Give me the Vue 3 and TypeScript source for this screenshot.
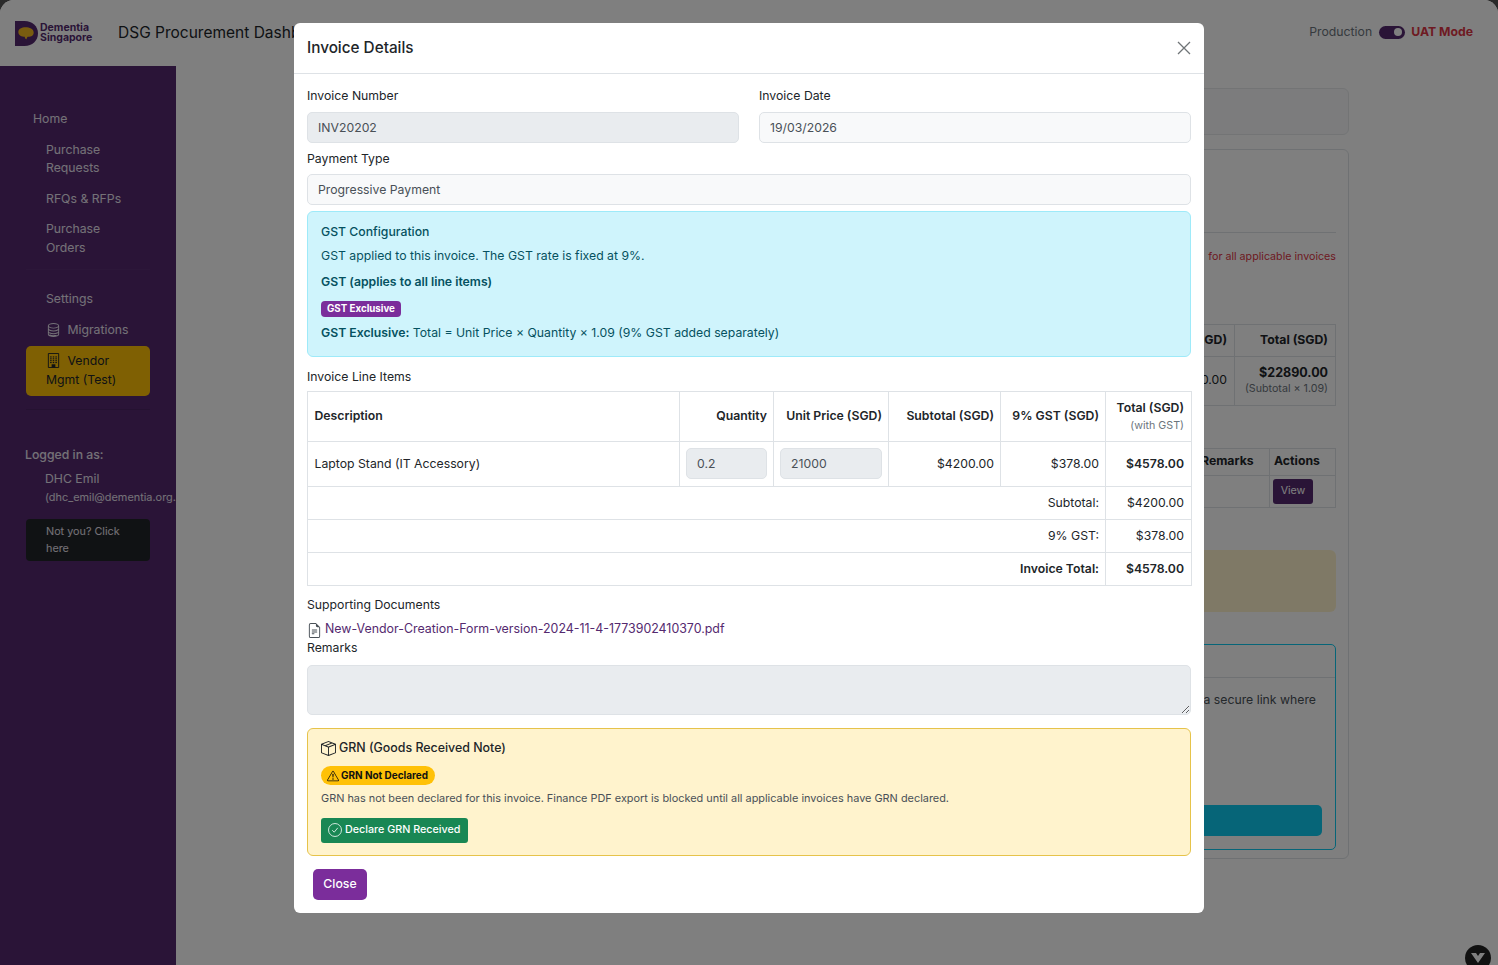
<script setup lang="ts">
const mainNav = ['Purchase Requests', 'RFQs & RFPs', 'Purchase Orders']
const buildingWindows = [3.6, 5.6, 7.6, 9.6]
const summaryRows = [
  { label: 'Subtotal:', value: '$4200.00', strong: false },
  { label: '9% GST:', value: '$378.00', strong: false },
  { label: 'Invoice Total:', value: '$4578.00', strong: true },
]
</script>

<template>
  <div class="page">
    <header class="topbar">
      <div class="logo">
        <svg class="logo-mark" viewBox="0 0 24 26" aria-hidden="true">
          <path fill="#54296f" d="M0 0h10c8 0 14 5.500 14 13s-6 13-14 13H0z" />
          <path fill="#f2b820" d="M3.500 11.500C3.500 8 7 6.500 11 6.500s8.500 1.500 8.500 5.500c0 3-2.500 4.500-5.500 4.500-1 0-1.500 .5-2 2.500-1-.2-1.800-1-1.800-2.500C7 16.500 3.500 15 3.500 11.500z" />
        </svg>
        <div class="logo-text">Dementia<br />Singapore</div>
      </div>
      <div class="app-title">DSG Procurement Dashboard</div>
      <div class="mode">
        <span class="mode-prod">Production</span>
        <span class="switch"><span class="knob"></span></span>
        <span class="mode-uat">UAT Mode</span>
      </div>
    </header>

    <div class="shell">
      <aside class="sidebar">
        <a class="nav-home">Home</a>
        <a v-for="item in mainNav" :key="item" class="nav-item">{{ item }}</a>
        <div class="side-rule"></div>
        <a class="nav-item">Settings</a>
        <a class="nav-item nav-tight">
          <svg class="nav-icon" viewBox="0 0 16 16" fill="currentColor" aria-hidden="true">
            <path d="M4.318 2.687C5.234 2.271 6.536 2 8 2s2.766.27 3.682.687C12.644 3.125 13 3.627 13 4c0 .374-.356.875-1.318 1.313C10.766 5.729 9.464 6 8 6s-2.766-.27-3.682-.687C3.356 4.875 3 4.373 3 4c0-.374.356-.875 1.318-1.313ZM13 5.698V7c0 .374-.356.875-1.318 1.313C10.766 8.729 9.464 9 8 9s-2.766-.27-3.682-.687C3.356 7.875 3 7.373 3 7V5.698c.271.202.58.378.904.525C4.978 6.711 6.427 7 8 7s3.022-.289 4.096-.777A4.920 4.920 0 0 0 13 5.698ZM14 4c0-1.007-.875-1.755-1.904-2.223C11.022 1.289 9.573 1 8 1s-3.022.289-4.096.777C2.875 2.245 2 2.993 2 4v9c0 1.007.875 1.755 1.904 2.223C4.978 15.710 6.427 16 8 16s3.022-.289 4.096-.777C13.125 14.755 14 14.007 14 13V4Zm-1 4.698V10c0 .374-.356.875-1.318 1.313C10.766 11.729 9.464 12 8 12s-2.766-.27-3.682-.687C3.356 10.875 3 10.373 3 10V8.698c.271.202.58.378.904.525C4.978 9.710 6.427 10 8 10s3.022-.289 4.096-.777A4.920 4.920 0 0 0 13 8.698Zm0 3V13c0 .374-.356.875-1.318 1.313C10.766 13.729 9.464 14 8 14s-2.766-.27-3.682-.687C3.356 13.875 3 13.373 3 13v-1.302c.271.202.58.378.904.525C4.978 12.710 6.427 13 8 13s3.022-.289 4.096-.777c.324-.147.633-.323.904-.525Z" />
          </svg>
          Migrations
        </a>
        <a class="nav-active">
          <svg class="nav-icon" viewBox="0 0 16 16" aria-hidden="true">
            <path fill="none" stroke="currentColor" d="M2.500.5h11v15h-11z" />
            <template v-for="y in buildingWindows" :key="y">
              <rect v-for="x in [4.400, 7.200, 10]" :key="x" :x="x" :y="y" width="1.600" height="1.200" fill="currentColor" />
            </template>
            <path fill="currentColor" d="M6 12h4v3.500H6z" />
          </svg>
          Vendor Mgmt (Test)
        </a>
        <div class="side-rule side-rule-low"></div>
        <div class="login-label">Logged in as:</div>
        <div class="login-name">DHC Emil</div>
        <div class="login-mail">(dhc_emil@dementia.org.sg)</div>
        <button class="logout" type="button">Not you? Click here</button>
      </aside>

      <main class="content">
        <section class="card-top"></section>
        <section class="card-main">
          <div class="card-head"></div>
          <p class="warn-line">for all applicable invoices</p>
          <table class="bg-table bg-table-a">
            <tbody>
              <tr class="bg-head">
                <th></th>
                <th class="col-gst">9% GST (SGD)</th>
                <th class="col-total">Total (SGD)</th>
              </tr>
              <tr>
                <td></td>
                <td class="col-gst">$1890.00</td>
                <td class="col-total">
                  <strong class="bg-sum">$22890.00</strong>
                  <small class="bg-note">(Subtotal × 1.09)</small>
                </td>
              </tr>
            </tbody>
          </table>
          <table class="bg-table bg-table-b">
            <tbody>
              <tr class="bg-head-b">
                <th></th>
                <th class="col-remarks">Remarks</th>
                <th class="col-actions">Actions</th>
              </tr>
              <tr>
                <td></td>
                <td class="col-remarks"></td>
                <td class="col-actions"><button class="view-btn" type="button">View</button></td>
              </tr>
            </tbody>
          </table>
          <div class="bg-yellow"></div>
          <div class="bg-info">
            <div class="bg-info-head"></div>
            <div class="bg-info-body">
              <p>a secure link where</p>
              <div class="bg-info-btn"></div>
            </div>
          </div>
        </section>
      </main>
    </div>

    <div class="dev-badge">
      <svg viewBox="0 0 26 26" aria-hidden="true">
        <circle cx="13" cy="13" r="13" fill="#222" />
        <path fill="#fff" d="M6 8h5l2 3 2-3h5l-7 10z" />
      </svg>
    </div>

    <div class="backdrop">
      <div class="modal" role="dialog" aria-label="Invoice Details">
        <div class="modal-head">
          <h2 class="modal-title">Invoice Details</h2>
          <button class="modal-x" type="button" aria-label="Close">
            <svg viewBox="0 0 16 16" aria-hidden="true">
              <path d="M2 2l12 12M14 2L2 14" fill="none" stroke="currentColor" stroke-width="1.300" />
            </svg>
          </button>
        </div>

        <div class="modal-body">
          <div class="two-col">
            <div>
              <label class="field-label">Invoice Number</label>
              <div class="control control-off">INV20202</div>
            </div>
            <div>
              <label class="field-label">Invoice Date</label>
              <div class="control control-light">19/03/2026</div>
            </div>
          </div>
          <label class="field-label field-pay">Payment Type</label>
          <div class="control control-light">Progressive Payment</div>

          <div class="alert-gst">
            <div class="alert-title">GST Configuration</div>
            <div class="alert-line">GST applied to this invoice. The GST rate is fixed at 9%.</div>
            <div class="alert-strong">GST (applies to all line items)</div>
            <span class="badge-gst">GST Exclusive</span>
            <div class="alert-formula"><b>GST Exclusive:</b> Total = Unit Price × Quantity × 1.09 (9% GST added separately)</div>
          </div>

          <label class="field-label field-items">Invoice Line Items</label>
          <table class="items">
            <colgroup>
              <col style="width: 372px" />
              <col style="width: 94px" />
              <col style="width: 115px" />
              <col style="width: 112px" />
              <col style="width: 105px" />
              <col style="width: 86px" />
            </colgroup>
            <thead>
              <tr class="row-head">
                <th class="left">Description</th>
                <th>Quantity</th>
                <th>Unit Price (SGD)</th>
                <th>Subtotal (SGD)</th>
                <th>9% GST (SGD)</th>
                <th>Total (SGD)<small>(with GST)</small></th>
              </tr>
            </thead>
            <tbody>
              <tr class="row-line">
                <td class="left">Laptop Stand (IT Accessory)</td>
                <td><div class="control control-off cell-input">0.2</div></td>
                <td><div class="control control-off cell-input">21000</div></td>
                <td>$4200.00</td>
                <td>$378.00</td>
                <td><b>$4578.00</b></td>
              </tr>
              <tr v-for="row in summaryRows" :key="row.label" class="row-sum">
                <td colspan="5">
                  <b v-if="row.strong">{{ row.label }}</b>
                  <template v-else>{{ row.label }}</template>
                </td>
                <td>
                  <b v-if="row.strong">{{ row.value }}</b>
                  <template v-else>{{ row.value }}</template>
                </td>
              </tr>
            </tbody>
          </table>

          <label class="field-label field-docs">Supporting Documents</label>
          <a class="doc-link">
            <svg viewBox="0 0 16 16" fill="#495057" aria-hidden="true">
              <path d="M5.500 7a.5.5 0 0 0 0 1h5a.5.5 0 0 0 0-1h-5zM5 9.500a.5.5 0 0 1 .5-.5h5a.5.5 0 0 1 0 1h-5a.5.5 0 0 1-.5-.5zm0 2a.5.5 0 0 1 .5-.5h2a.5.5 0 0 1 0 1h-2a.5.5 0 0 1-.5-.5z" />
              <path d="M9.500 0H4a2 2 0 0 0-2 2v12a2 2 0 0 0 2 2h8a2 2 0 0 0 2-2V4.500L9.500 0zm0 1v2A1.500 1.500 0 0 0 11 4.500h2V14a1 1 0 0 1-1 1H4a1 1 0 0 1-1-1V2a1 1 0 0 1 1-1h5.500z" />
            </svg>
            New-Vendor-Creation-Form-version-2024-11-4-1773902410370.pdf
          </a>
          <label class="field-label field-remarks">Remarks</label>
          <textarea class="remarks" disabled aria-label="Remarks"></textarea>

          <div class="grn">
            <div class="grn-title">
              <svg viewBox="0 0 16 16" fill="currentColor" aria-hidden="true">
                <path d="M8.186 1.113a.5.5 0 0 0-.372 0L1.846 3.500l2.404.961L10.404 2l-2.218-.887zm3.564 1.426L5.596 5 8 5.961 14.154 3.500l-2.404-.961zm3.250 1.700-6.500 2.600v7.922l6.500-2.600V4.240zM7.500 14.762V6.838L1 4.239v7.925l6.500 2.600zM7.443.184a1.500 1.500 0 0 1 1.114 0l7.129 2.852A.5.5 0 0 1 16 3.500v8.662a1 1 0 0 1-.629.928l-7.185 2.874a.5.5 0 0 1-.372 0L.63 13.090a1 1 0 0 1-.63-.928V3.500a.5.5 0 0 1 .314-.464L7.443.184z" />
              </svg>
              GRN (Goods Received Note)
            </div>
            <span class="badge-grn">
              <svg viewBox="0 0 16 16" fill="currentColor" aria-hidden="true">
                <path d="M7.938 2.016A.13.13 0 0 1 8.002 2a.13.13 0 0 1 .063.016.146.146 0 0 1 .054.057l6.857 11.667c.036.06.035.124.002.183a.163.163 0 0 1-.054.06.116.116 0 0 1-.066.017H1.146a.115.115 0 0 1-.066-.017.163.163 0 0 1-.054-.06.176.176 0 0 1 .002-.183L7.884 2.073a.147.147 0 0 1 .054-.057zm1.044-.45a1.130 1.130 0 0 0-1.960 0L.165 13.233c-.457.778.091 1.767.98 1.767h13.713c.889 0 1.438-.99.98-1.767L8.982 1.566z" />
                <path d="M7.002 12a1 1 0 1 1 2 0 1 1 0 0 1-2 0zM7.100 5.995a.905.905 0 1 1 1.800 0l-.35 3.507a.552.552 0 0 1-1.100 0L7.100 5.995z" />
              </svg>
              GRN Not Declared
            </span>
            <p class="grn-text">GRN has not been declared for this invoice. Finance PDF export is blocked until all applicable invoices have GRN declared.</p>
            <button class="grn-btn" type="button">
              <svg viewBox="0 0 16 16" aria-hidden="true">
                <circle cx="8" cy="8" r="7.400" fill="none" stroke="currentColor" stroke-width=".9" />
                <path d="M4.800 8.200l2.300 2.300 4.100-5" fill="none" stroke="currentColor" stroke-width=".9" />
              </svg>
              Declare GRN Received
            </button>
          </div>

          <button class="close-btn" type="button">Close</button>
        </div>
      </div>
    </div>
  </div>
</template>

<style>
html,
body {
  margin: 0;
  background: #2a2a2a;
}
</style>

<style scoped>
.page {
  position: relative;
  width: 1498px;
  height: 965px;
  display: flex;
  flex-direction: column;
  overflow: hidden;
  border-radius: 14px 14px 0 0;
  background: #fff;
  color: #212529;
  font-family: Inter, 'Liberation Sans', sans-serif;
  font-size: 12.250px;
  line-height: 18.375px;
}

.topbar {
  flex: 0 0 66px;
  display: flex;
  align-items: center;
  padding: 0 25px 0 15px;
}
.logo {
  display: flex;
  align-items: center;
  gap: 2px;
  width: 103px;
}
.logo-mark {
  width: 23px;
  height: 25px;
}
.logo-text {
  color: #54296f;
  font-size: 10.500px;
  font-weight: 700;
  line-height: 10.500px;
}
.app-title {
  font-size: 15.500px;
  white-space: nowrap;
}
.mode {
  margin-left: auto;
  display: flex;
  align-items: center;
  gap: 6.500px;
  margin-top: -2px;
}
.mode-prod {
  color: #6c757d;
}
.switch {
  width: 26px;
  height: 13px;
  padding: 2.500px;
  box-sizing: border-box;
  display: flex;
  justify-content: flex-end;
  border-radius: 7px;
  background: #54296f;
}
.knob {
  width: 8px;
  height: 8px;
  border-radius: 50%;
  background: #fff;
}
.mode-uat {
  color: #dc3545;
  font-weight: 700;
}

.shell {
  flex: 1;
  display: flex;
  min-height: 0;
}

.sidebar {
  flex: 0 0 176px;
  box-sizing: border-box;
  padding: 44px 26px 0;
  overflow: hidden;
  background: #54296f;
  color: #fff;
}
.nav-home {
  display: block;
  margin: 0 0 12.250px 7px;
  color: #e9e3ee;
}
.nav-item {
  display: block;
  margin-bottom: 12.250px;
  padding: 0 20px;
  color: #e9e3ee;
}
.nav-tight {
  margin-bottom: 7px;
}
.nav-icon {
  width: 15px;
  height: 15px;
  margin: 0 3px 0 0;
  vertical-align: -3px;
}
.side-rule {
  height: 1px;
  margin: 5px 0 20px;
  background: rgba(255, 255, 255, .03);
}
.side-rule-low {
  margin: 13px 0 36px;
  background: rgba(0, 0, 0, .1);
}
.nav-active {
  display: block;
  height: 50px;
  box-sizing: border-box;
  padding: 6px 20px;
  border-radius: 5px;
  background: #ffc107;
  color: #212529;
}
.login-label {
  margin-left: -1px;
  color: #e9e3ee;
  font-weight: 500;
}
.login-name {
  margin: 5.500px 0 0 19px;
  color: #e9e3ee;
}
.login-mail {
  margin: 0 -30px 13.500px 19px;
  color: #e9e3ee;
  font-size: 10.900px;
  line-height: 17px;
  white-space: nowrap;
}
.logout {
  display: block;
  width: 124px;
  height: 42px;
  padding: 0 20px;
  border: 0;
  border-radius: 4px;
  background: #212529;
  color: #e9e3ee;
  font: inherit;
  font-size: 10.800px;
  line-height: 17px;
  text-align: left;
}

.content {
  flex: 1;
  min-width: 0;
  padding: 22px 149px 0 130px;
}
.card-top {
  height: 47px;
  box-sizing: border-box;
  border: 1px solid #e6e8eb;
  border-radius: 6px;
  background: #f8f9fa;
}
.card-main {
  height: 710px;
  box-sizing: border-box;
  margin-top: 14px;
  padding: 0 12px;
  border: 1px solid #dee2e6;
  border-radius: 6px;
}
.card-head {
  height: 82px;
  border-bottom: 1px solid #dee2e6;
}
.warn-line {
  margin: 14.800px 0 0;
  color: #dc3545;
  font-size: 10.700px;
  text-align: right;
}
.bg-table {
  width: 100%;
  border-collapse: collapse;
}
.bg-table td,
.bg-table th {
  border: 1px solid #dee2e6;
  padding: 0 7px;
  text-align: right;
}
.bg-table-a {
  margin-top: 57.400px;
}
.bg-head {
  height: 32px;
}
.col-gst {
  width: 110px;
}
.col-total {
  width: 86px;
}
.bg-sum {
  display: block;
  font-size: 12.500px;
  line-height: 17px;
}
.bg-note {
  display: block;
  color: #6c757d;
  font-size: 10.700px;
  line-height: 16px;
  white-space: nowrap;
}
.bg-table-a td {
  height: 48px;
}
.bg-table-b {
  margin-top: 42px;
}
.bg-head-b {
  height: 27px;
}
.bg-table-b th {
  text-align: left;
  padding: 0 4px;
}
.bg-table-b td {
  height: 31px;
  padding: 0 3px;
  text-align: left;
}
.col-remarks {
  width: 64px;
}
.col-actions {
  width: 57px;
}
.view-btn {
  display: block;
  width: 40px;
  height: 25px;
  padding: 0;
  border: 0;
  border-radius: 3px;
  background: #54296f;
  color: #fff;
  font: inherit;
  font-size: 10.700px;
}
.bg-yellow {
  height: 62px;
  margin-top: 42px;
  border-radius: 6px;
  background: #fff3cd;
}
.bg-info {
  height: 206px;
  box-sizing: border-box;
  margin-top: 32px;
  border: 1px solid #0dcaf0;
  border-radius: 5px;
}
.bg-info-head {
  height: 32px;
  border-bottom: 1px solid #dee2e6;
}
.bg-info-body {
  padding: 13px 13px 0;
}
.bg-info-body p {
  margin: 0 6px 0 0;
  color: #495057;
  text-align: right;
}
.bg-info-btn {
  height: 31px;
  margin-top: 95.600px;
  border-radius: 5px;
  background: #0dcaf0;
}

.dev-badge {
  position: absolute;
  right: 7px;
  bottom: -6px;
  width: 26px;
  height: 26px;
}
.dev-badge svg {
  display: block;
  width: 26px;
  height: 26px;
}

.backdrop {
  position: absolute;
  inset: 0;
  display: flex;
  justify-content: center;
  align-items: flex-start;
  background: rgba(0, 0, 0, .5);
}
.modal {
  width: 910px;
  height: 890px;
  box-sizing: border-box;
  margin-top: 23px;
  border-radius: 6px;
  background: #fff;
}
.modal-head {
  height: 51px;
  box-sizing: border-box;
  display: flex;
  align-items: center;
  justify-content: space-between;
  padding: 0 12px 0 13px;
  border-bottom: 1px solid #dee2e6;
}
.modal-title {
  margin: 0;
  font-size: 15.300px;
  font-weight: 500;
  line-height: 24px;
}
.modal-x {
  width: 16px;
  height: 16px;
  padding: 0;
  border: 0;
  background: none;
  color: #6f7477;
}
.modal-x svg {
  display: block;
}
.modal-body {
  padding: 13px 13px 0;
}
.two-col {
  display: grid;
  grid-template-columns: 1fr 1fr;
  gap: 20px;
}
.field-label {
  display: block;
  margin-bottom: 6.125px;
}
.field-pay {
  margin-top: 7px;
}
.control {
  height: 31px;
  box-sizing: border-box;
  padding: 5px 10px;
  border: 1px solid #dee2e6;
  border-radius: 5px;
  color: #495057;
  line-height: 19px;
}
.control-off {
  background: #e9ecef;
}
.control-light {
  background: #f8f9fa;
}

.alert-gst {
  height: 146px;
  box-sizing: border-box;
  margin-top: 6px;
  padding: 11px 13px;
  border: 1px solid #9eeaf9;
  border-radius: 6px;
  background: #cff4fc;
  color: #055160;
}
.alert-title {
  font-weight: 500;
}
.alert-line {
  margin-top: 5.600px;
}
.alert-strong {
  margin-top: 7.600px;
  font-weight: 600;
}
.badge-gst {
  display: block;
  width: fit-content;
  height: 16px;
  margin-top: 10px;
  padding: 0 6px;
  border-radius: 4px;
  background: #7b2d9b;
  color: #fff;
  font-size: 9.750px;
  font-weight: 700;
  line-height: 16px;
}
.alert-formula {
  margin-top: 7px;
}
.alert-formula b {
  font-weight: 600;
}

.field-items {
  margin: 11px 0 4.500px;
}
.items {
  width: 884px;
  table-layout: fixed;
  border-collapse: collapse;
}
.items th,
.items td {
  box-sizing: border-box;
  padding: 0 6px;
  border: 1px solid #dee2e6;
  text-align: right;
}
.items th:last-child,
.items td:last-child {
  padding-right: 7px;
}
.items .left {
  padding-left: 6.500px;
  text-align: left;
}
.items b {
  font-weight: 600;
}
.items th {
  font-weight: 600;
}
.items small {
  display: block;
  color: #6c757d;
  font-size: 10.700px;
  font-weight: 400;
  line-height: 17px;
}
.row-head {
  height: 50px;
}
.row-line {
  height: 45px;
}
.row-sum {
  height: 33px;
}
.cell-input {
  text-align: left;
}

.field-docs {
  margin: 10px 0 5.600px;
}
.doc-link {
  display: flex;
  align-items: center;
  gap: 3px;
  color: #54296f;
  font-size: 12.400px;
}
.doc-link svg {
  width: 15px;
  height: 15px;
  margin-top: 2px;
}
.field-remarks {
  margin: .6px 0 7.600px;
}
.remarks {
  display: block;
  width: 100%;
  height: 50px;
  box-sizing: border-box;
  border: 1px solid #dee2e6;
  border-radius: 5px;
  background: #e9ecef;
  resize: vertical;
}

.grn {
  height: 128px;
  box-sizing: border-box;
  margin-top: 13px;
  padding: 10px 13px;
  border: 1px solid #e6c34a;
  border-radius: 6px;
  background: #fff3cd;
}
.grn-title {
  display: flex;
  align-items: center;
  gap: 3px;
  font-size: 12.400px;
  font-weight: 500;
}
.grn-title svg {
  width: 15px;
  height: 15px;
  margin-top: 2px;
}
.badge-grn {
  display: flex;
  align-items: center;
  gap: 2px;
  width: fit-content;
  height: 19px;
  box-sizing: border-box;
  margin-top: 8.800px;
  padding: 0 7px 0 6px;
  border-radius: 10px;
  background: #ffc107;
  color: #111;
  font-size: 9.950px;
  font-weight: 700;
}
.badge-grn svg {
  width: 12px;
  height: 12px;
  margin-top: 1px;
}
.grn-text {
  margin: 4.500px 0 0;
  color: #495057;
  font-size: 10.900px;
  line-height: 19px;
}
.grn-btn {
  display: flex;
  align-items: center;
  gap: 3px;
  height: 25px;
  margin-top: 9.500px;
  padding: 0 7px;
  border: 0;
  border-radius: 3px;
  background: #198754;
  color: #fff;
  font: inherit;
  font-size: 10.750px;
  font-weight: 500;
}
.grn-btn svg {
  width: 14px;
  height: 14px;
}
.close-btn {
  display: block;
  width: 54px;
  height: 31px;
  margin: 13px 0 0 6px;
  padding: 0;
  border: 0;
  border-radius: 5px;
  background: #7b2d9b;
  color: #fff;
  font: inherit;
  font-weight: 500;
}
</style>
